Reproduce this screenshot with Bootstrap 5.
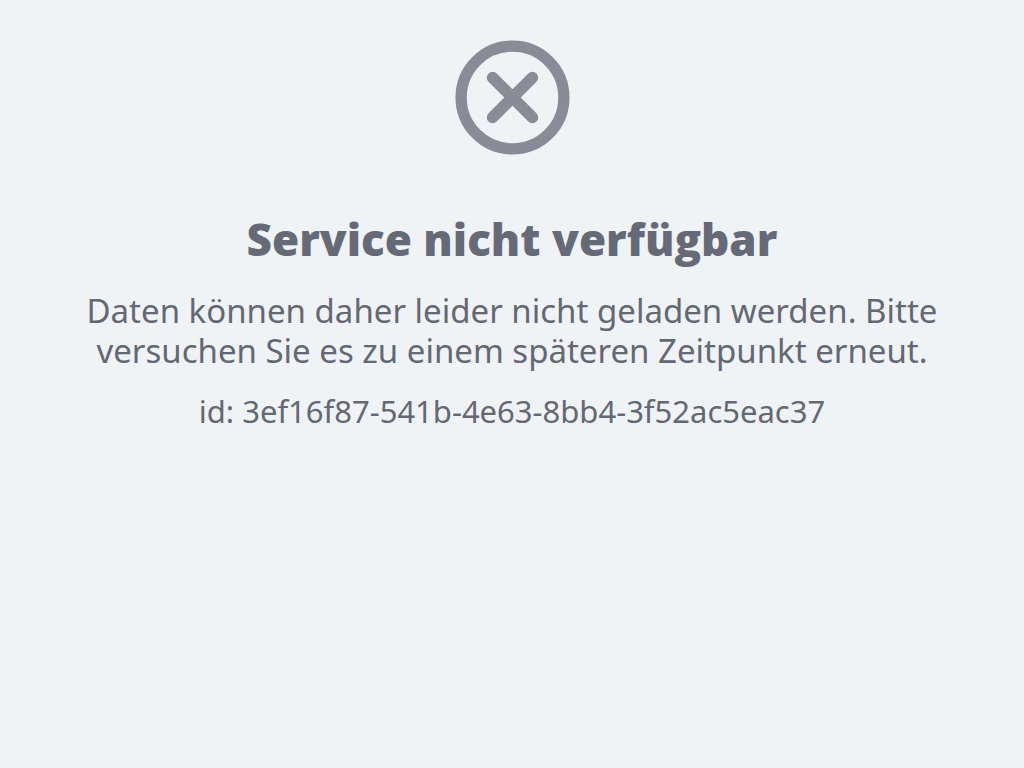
<!DOCTYPE html>
<html lang="de">
<head>
<meta charset="utf-8">
<meta name="viewport" content="width=device-width, initial-scale=1">
<title>Service nicht verfügbar</title>
<link href="https://cdn.jsdelivr.net/npm/bootstrap@5.3.0/dist/css/bootstrap.min.css" rel="stylesheet">
<style>
body { background: #eff3f6; color: #646873; font-family: "Noto Sans", sans-serif; }
.status-page { padding-top: 40px; }
.status-icon { width: 115px; height: 115px; color: #898c97; }
.status-title { margin-top: 56px; font-size: 44px; line-height: 56px; font-weight: 800; font-family: "Open Sans", sans-serif; color: #666a76; }
.status-text { margin-top: 24px; font-size: 33px; line-height: 40px; max-width: 880px; }
.status-id { margin-top: 20px; font-size: 31px; line-height: 40px; }
</style>
</head>
<body>
<main class="status-page container-fluid d-flex flex-column align-items-center text-center">
  <svg class="status-icon" viewBox="0 0 115 115" fill="none" stroke="currentColor" aria-hidden="true">
    <circle cx="57.5" cy="57.5" r="51.4" stroke-width="11.3"/>
    <path d="M37.6 37.6l39.8 39.8M77.4 37.6L37.6 77.4" stroke-width="11.6" stroke-linecap="round"/>
  </svg>
  <h1 class="status-title mb-0">Service nicht verfügbar</h1>
  <p class="status-text mb-0">Daten können daher leider nicht geladen werden. Bitte versuchen Sie es zu einem späteren Zeitpunkt erneut.</p>
  <p class="status-id mb-0">id: 3ef16f87-541b-4e63-8bb4-3f52ac5eac37</p>
</main>
<script src="https://cdn.jsdelivr.net/npm/bootstrap@5.3.0/dist/js/bootstrap.bundle.min.js"></script>
</body>
</html>
